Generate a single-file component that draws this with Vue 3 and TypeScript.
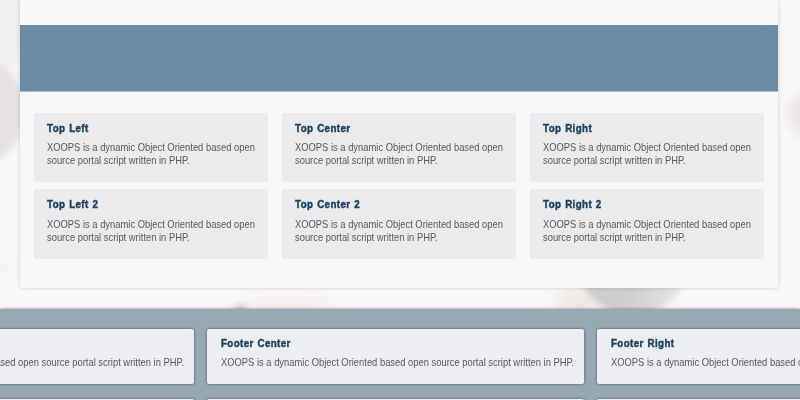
<script setup lang="ts">
interface Block { title: string }

const description = 'XOOPS is a dynamic Object Oriented based open source portal script written in PHP.'
const topRows: Block[][] = [
  [{ title: 'Top Left' }, { title: 'Top Center' }, { title: 'Top Right' }],
  [{ title: 'Top Left 2' }, { title: 'Top Center 2' }, { title: 'Top Right 2' }],
]
const footerBlocks: Block[] = [{ title: '' }, { title: 'Footer Center' }, { title: 'Footer Right' }]
const nextFooterBlocks: number[] = [1, 2, 3]
</script>

<template>
  <div class="page">
    <svg class="backdrop" viewBox="0 0 800 310" aria-hidden="true">
      <defs>
        <filter id="soft" x="-50%" y="-50%" width="200%" height="200%"><feGaussianBlur stdDeviation="7" /></filter>
        <filter id="crisp" x="-50%" y="-50%" width="200%" height="200%"><feGaussianBlur stdDeviation="3" /></filter>
        <linearGradient id="disc" x1="0" x2="1"><stop offset="0" stop-color="#cbcacc" /><stop offset=".45" stop-color="#cfcfd1" /><stop offset="1" stop-color="#e8e7e9" /></linearGradient>
      </defs>
      <ellipse cx="3" cy="10" rx="32" ry="62" fill="#efeff2" filter="url(#soft)" />
      <ellipse cx="-22" cy="111" rx="47" ry="54" fill="#e6e2e2" filter="url(#crisp)" />
      <ellipse cx="2" cy="267" rx="9" ry="12" fill="#f3f3f5" filter="url(#soft)" />
      <ellipse cx="807" cy="114" rx="19" ry="21" fill="#ebe1e1" filter="url(#soft)" />
      <ellipse cx="285" cy="306" rx="50" ry="14" fill="#f5f1f1" filter="url(#soft)" />
      <ellipse cx="240" cy="309" rx="7" ry="4" fill="#c8c3c3" filter="url(#crisp)" />
      <ellipse cx="578" cy="302" rx="23" ry="13" fill="#efe6e5" filter="url(#soft)" />
      <circle cx="633" cy="260" r="56" fill="url(#disc)" filter="url(#crisp)" />
    </svg>

    <main class="sheet">
      <div class="banner"></div>
      <div class="rows">
        <div v-for="(row, i) in topRows" :key="i" class="row">
          <section v-for="block in row" :key="block.title" class="block">
            <h2 class="title">{{ block.title }}</h2>
            <p class="text">{{ description }}</p>
          </section>
        </div>
      </div>
    </main>

    <footer class="footer">
      <div class="footer-row">
        <section v-for="block in footerBlocks" :key="block.title" class="footer-block">
          <h2 class="title">{{ block.title }}</h2>
          <p class="text wide">{{ description }}</p>
        </section>
      </div>
      <div class="footer-row">
        <section v-for="n in nextFooterBlocks" :key="n" class="footer-block"></section>
      </div>
    </footer>
  </div>
</template>

<style>
body { overflow: hidden; }
</style>

<style scoped>
.page {
  position: relative;
  width: 800px;
  height: 400px;
  overflow: hidden;
  background: #f8f8fa;
  font-family: "Liberation Sans", Arial, sans-serif;
}
.backdrop { position: absolute; top: 0; left: 0; width: 800px; height: 310px; }
.sheet {
  position: relative;
  box-sizing: border-box;
  width: 758px;
  height: 288px;
  margin: 0 0 21px 20px;
  padding-top: 25px;
  background: #f6f7f9;
  border-radius: 0 0 3px 3px;
  box-shadow: 0 0 4px rgba(0, 0, 0, .18);
}
.banner { height: 66px; background: #6b8aa3; border-bottom: 1px solid #a9bac8; box-sizing: content-box; }
.rows { display: flex; flex-direction: column; gap: 7px; padding: 21px 13.6px 0; }
.row { display: grid; grid-template-columns: repeat(3, 234.4px); column-gap: 13.6px; }
.block { box-sizing: border-box; height: 69px; padding: 8px 0 0 13.4px; background: #ebebed; border-radius: 2px; }
.row + .row .block { height: 70px; }
.row + .row .text { margin-top: 7px; }
.title {
  width: max-content;
  height: 14px;
  margin: 0;
  font-size: 11px;
  line-height: 14px;
  font-weight: 700;
  letter-spacing: .42px;
  word-spacing: .8px;
  color: #1d425f;
  -webkit-text-stroke: .45px #1d425f;
  white-space: nowrap;
  transform: scaleX(.89);
  transform-origin: 0 0;
}
.text {
  width: 262px;
  margin: 6px 0 0;
  font-size: 11.3px;
  line-height: 13px;
  color: #59595a;
  transform: scaleX(.83);
  transform-origin: 0 0;
}
.wide { width: 435px; white-space: nowrap; }
.footer {
  position: relative;
  box-sizing: border-box;
  height: 91px;
  padding-top: 20px;
  overflow: hidden;
  background: #96a9b5;
  box-shadow: 0 0 3px rgba(0, 0, 0, .45);
}
.footer-row { display: grid; grid-template-columns: repeat(3, 377px); column-gap: 13.4px; margin: 0 0 15px -183.4px; }
.footer-block {
  box-sizing: border-box;
  height: 55px;
  padding: 7px 0 0 14px;
  background: #edeef2;
  border-radius: 2px;
  box-shadow: 0 0 3px rgba(0, 0, 0, .5);
}
</style>
